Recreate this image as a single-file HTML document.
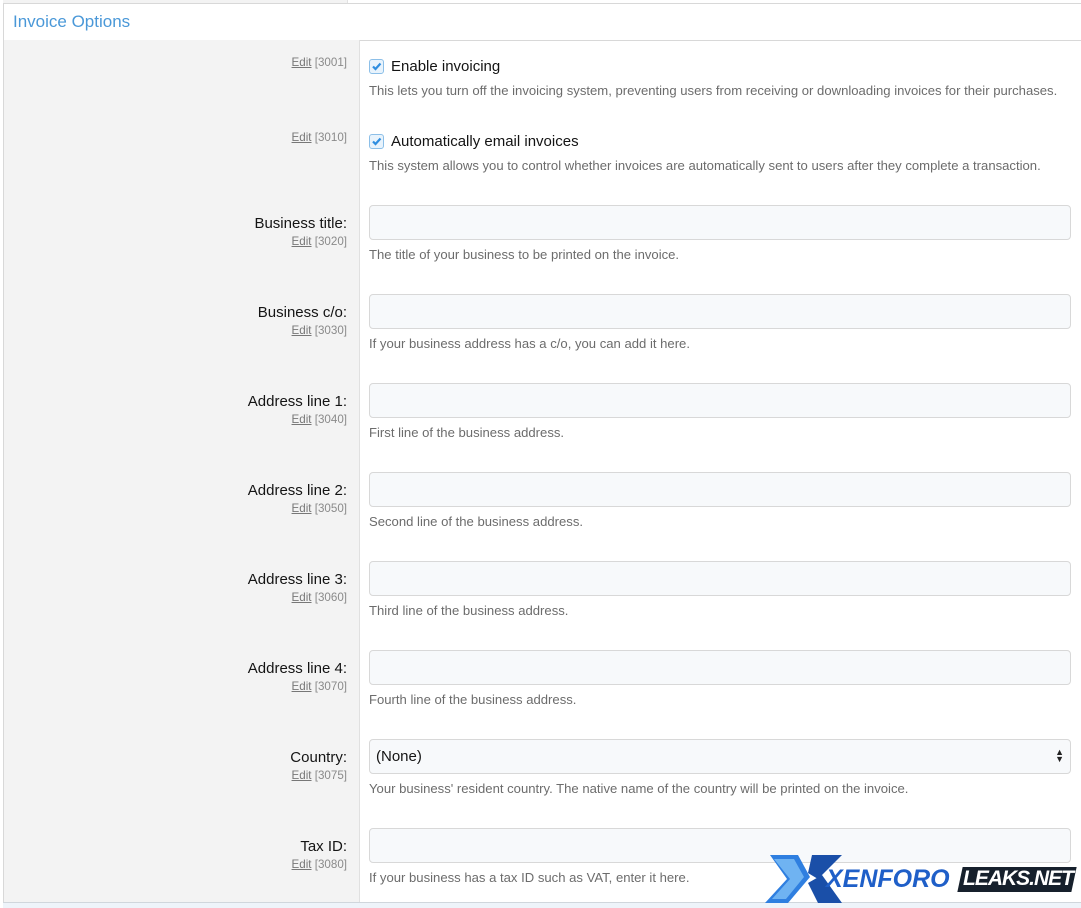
<!DOCTYPE html>
<html><head><style>
body{margin:0;width:1081px;height:907px;overflow:hidden;background:#fff;font-family:"Liberation Sans",Arial,sans-serif;position:relative}
.a{position:absolute}
.lab{position:absolute;right:734px;text-align:right;font-size:15px;color:#141414;white-space:nowrap}
.ed{position:absolute;right:734px;font-size:11.6px;color:#8a8a8a;white-space:nowrap}
.ed u{color:#777}
.ds{position:absolute;left:369px;font-size:13.1px;color:#6c6c6c;white-space:nowrap}
.in{position:absolute;left:369px;width:700px;height:33px;border:1px solid #d8d8d8;border-radius:4px;background:#f7f9fb}
.cb{position:absolute;left:369px;width:13px;height:13px;border:1px solid #8cbfe8;border-radius:3px;background:#e8f3fc}
.cl{position:absolute;left:391px;font-size:15px;color:#141414}
</style></head><body>
<div class="a" style="left:3px;top:0;width:344px;height:3px;background:#f3f3f3;border-right:1px solid #e2e2e2"></div>
<div class="a" style="left:3px;top:3px;width:1078px;height:36px;border-top:1px solid #d8d8d8;border-bottom:1px solid #d8d8d8;border-left:1px solid #d8d8d8;background:#fff"></div>
<div class="a" style="left:13px;top:12px;font-size:17px;color:#4a98d8">Invoice Options</div>
<div class="a" style="left:3px;top:40px;width:355px;height:862px;background:#f3f3f3;border-left:1px solid #d8d8d8;border-right:1px solid #e0e0e0"></div>
<div class="a" style="left:3px;top:902px;width:1078px;height:5px;background:#eef4fa;border-top:1px solid #d0d6dc"></div>

<div class="ed" style="top:56px"><u>Edit</u> [3001]</div>
<div class="cb" style="top:59px"><svg width="13" height="13" viewBox="0 0 13 13" style="position:absolute;left:0;top:0"><path d="M3 6.5l2.5 2.5L10.5 3.5" stroke="#2f8ee0" stroke-width="2.2" fill="none"/></svg></div>
<div class="cl" style="top:58px">Enable invoicing</div>
<div class="ds" style="top:83px">This lets you turn off the invoicing system, preventing users from receiving or downloading invoices for their purchases.</div>

<div class="ed" style="top:131px"><u>Edit</u> [3010]</div>
<div class="cb" style="top:134px"><svg width="13" height="13" viewBox="0 0 13 13" style="position:absolute;left:0;top:0"><path d="M3 6.5l2.5 2.5L10.5 3.5" stroke="#2f8ee0" stroke-width="2.2" fill="none"/></svg></div>
<div class="cl" style="top:133px">Automatically email invoices</div>
<div class="ds" style="top:158px">This system allows you to control whether invoices are automatically sent to users after they complete a transaction.</div>

<div class="lab" style="top:215px">Business title:</div><div class="ed" style="top:235px"><u>Edit</u> [3020]</div>
<div class="in" style="top:205px"></div><div class="ds" style="top:247px">The title of your business to be printed on the invoice.</div>

<div class="lab" style="top:304px">Business c/o:</div><div class="ed" style="top:324px"><u>Edit</u> [3030]</div>
<div class="in" style="top:294px"></div><div class="ds" style="top:336px">If your business address has a c/o, you can add it here.</div>

<div class="lab" style="top:393px">Address line 1:</div><div class="ed" style="top:413px"><u>Edit</u> [3040]</div>
<div class="in" style="top:383px"></div><div class="ds" style="top:425px">First line of the business address.</div>

<div class="lab" style="top:482px">Address line 2:</div><div class="ed" style="top:502px"><u>Edit</u> [3050]</div>
<div class="in" style="top:472px"></div><div class="ds" style="top:514px">Second line of the business address.</div>

<div class="lab" style="top:571px">Address line 3:</div><div class="ed" style="top:591px"><u>Edit</u> [3060]</div>
<div class="in" style="top:561px"></div><div class="ds" style="top:603px">Third line of the business address.</div>

<div class="lab" style="top:660px">Address line 4:</div><div class="ed" style="top:680px"><u>Edit</u> [3070]</div>
<div class="in" style="top:650px"></div><div class="ds" style="top:692px">Fourth line of the business address.</div>

<div class="lab" style="top:749px">Country:</div><div class="ed" style="top:769px"><u>Edit</u> [3075]</div>
<div class="in" style="top:739px"><span style="position:absolute;left:6px;top:8px;font-size:15px;color:#141414">(None)</span><span style="position:absolute;right:6px;top:9px;font-size:9px;line-height:7px;color:#222">▲<br>▼</span></div>
<div class="ds" style="top:781px">Your business' resident country. The native name of the country will be printed on the invoice.</div>

<div class="lab" style="top:838px">Tax ID:</div><div class="ed" style="top:858px"><u>Edit</u> [3080]</div>
<div class="in" style="top:828px"></div><div class="ds" style="top:870px">If your business has a tax ID such as VAT, enter it here.</div>

<svg class="a" style="left:760px;top:853px" width="90" height="52" viewBox="0 0 90 52"><path d="M10 2h28l12 22-22 26H5l22-24z" fill="#2f7fe0"/><path d="M52 2h30L58 26 48 20z" fill="#1a4fa8"/><path d="M48 30l10 20h24L62 22z" fill="#1a4fa8"/><path d="M14 6h20l10 18-18 22H12l18-20z" fill="#6fb3f2"/></svg>
<div class="a" style="left:826px;top:865px;font-size:25px;font-weight:bold;font-style:italic;color:#1f5fc8;letter-spacing:0px">XENFORO</div>
<div class="a" style="left:960px;top:867px;width:114px;height:25px;background:#16202c;transform:skewX(-12deg)"></div>
<div class="a" style="left:963px;top:867px;font-size:21px;font-weight:bold;font-style:italic;color:#fff;letter-spacing:-1px">LEAKS.NET</div>
</body></html>
